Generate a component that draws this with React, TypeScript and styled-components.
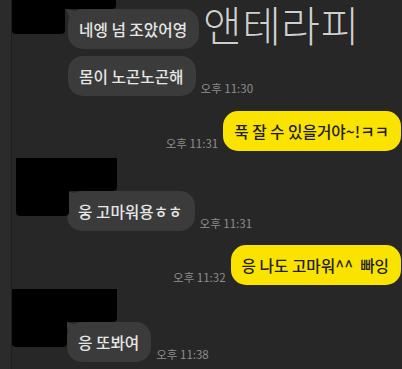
import React from "react";
import styled, { createGlobalStyle } from "styled-components";

const Global = createGlobalStyle`
  html, body { margin: 0; padding: 0; background: #272727; }
  body { font-family: "Noto Sans CJK KR", "Noto Sans", sans-serif; }
  * { box-sizing: border-box; }
`;

const Screen = styled.div`
  position: relative;
  width: 402px;
  height: 369px;
  overflow: hidden;
  display: flex;
  background: #272727;
`;

const Strip = styled.div`
  width: 12px;
  flex: none;
  background: #2b2b2b;
  border-right: 1px solid #1f1f1f;
`;

const Feed = styled.div`
  flex: 1;
  display: flex;
  flex-direction: column;
`;

const Watermark = styled.div`
  position: absolute;
  left: 203px;
  top: 0px;
  font-size: 42px;
  font-weight: 300;
  letter-spacing: 0.5px;
  color: #cfcfcf;
  line-height: 1.12;
  text-shadow: 0 0 1px rgba(0, 0, 0, 0.6);
  pointer-events: none;
`;

const Incoming = styled.div<{ $left: number; $top: number }>`
  display: grid;
  grid-template-columns: ${(p) => p.$left}px auto 1fr;
  grid-template-rows: 33px auto;
  margin-top: ${(p) => p.$top}px;
`;

const Name = styled.div<{ $w: number }>`
  grid-column: 2 / 4;
  grid-row: 1;
  width: ${(p) => p.$w}px;
  height: 33px;
  background: #000;
  border-radius: 0 0 4px 4px;
  z-index: 1;
`;

const Avatar = styled.div<{ $w: number }>`
  grid-column: 2;
  grid-row: 1 / 3;
  width: ${(p) => p.$w}px;
  height: 58px;
  background: #000;
  border-radius: 4px;
  z-index: 1;
`;

const Stack = styled.div<{ $ml: number }>`
  grid-column: 3;
  grid-row: 2;
  display: flex;
  flex-direction: column;
  gap: 7px;
  margin-left: ${(p) => p.$ml}px;
`;

const Line = styled.div<{ $out?: boolean }>`
  display: flex;
  align-items: flex-end;
  flex-direction: ${(p) => (p.$out ? "row-reverse" : "row")};
  gap: 5px;
`;

const Bubble = styled.div<{ $out?: boolean; $tail?: boolean }>`
  position: relative;
  height: 40px;
  display: flex;
  align-items: center;
  padding: 0 12px 0 11px;
  border-radius: 15px;
  font-size: 15.7px;
  font-weight: 500;
  white-space: pre;
  background: ${(p) => (p.$out ? "#fbe300" : "#3b3b3b")};
  color: ${(p) => (p.$out ? "#1e1e1e" : "#e6e6e6")};
  &::before {
    content: "";
    display: ${(p) => (p.$tail ? "block" : "none")};
    position: absolute;
    left: -2px;
    top: 0px;
    width: 10px;
    height: 10px;
    background: #3b3b3b;
    clip-path: polygon(0 0, 100% 20%, 100% 100%, 40% 100%);
  }
`;

const Time = styled.span`
  font-size: 11.5px;
  color: #8e8e8e;
  line-height: 1;
  padding-bottom: 2px;
  white-space: nowrap;
`;

const Outgoing = styled.div<{ $top: number }>`
  margin-top: ${(p) => p.$top}px;
  padding-right: 1px;
`;

export default function App() {
  return (
    <>
      <Global />
      <Screen>
        <Strip />
        <Feed>
          <Incoming $left={0} $top={-24}>
            <Name $w={104} />
            <Avatar $w={53} />
            <Stack $ml={3}>
              <Line>
                <Bubble $tail>네엥 넘 조았어영</Bubble>
              </Line>
              <Line>
                <Bubble>몸이 노곤노곤해</Bubble>
                <Time>오후 11:30</Time>
              </Line>
            </Stack>
          </Incoming>
          <Outgoing $top={15}>
            <Line $out>
              <Bubble $out>{"푹 잘 수 있을거야~!ㅋㅋ"}</Bubble>
              <Time>오후 11:31</Time>
            </Line>
          </Outgoing>
          <Incoming $left={4} $top={7}>
            <Name $w={101} />
            <Avatar $w={53} />
            <Stack $ml={-2}>
              <Line>
                <Bubble $tail>웅 고마워용ㅎㅎ</Bubble>
                <Time>오후 11:31</Time>
              </Line>
            </Stack>
          </Incoming>
          <Outgoing $top={14}>
            <Line $out>
              <Bubble $out>{"응 나도 고마워^^  빠잉"}</Bubble>
              <Time>오후 11:32</Time>
            </Line>
          </Outgoing>
          <Incoming $left={0} $top={4}>
            <Name $w={105} />
            <Avatar $w={55} />
            <Stack $ml={0}>
              <Line>
                <Bubble $tail>응 또봐여</Bubble>
                <Time>오후 11:38</Time>
              </Line>
            </Stack>
          </Incoming>
        </Feed>
        <Watermark>앤테라피</Watermark>
      </Screen>
    </>
  );
}
